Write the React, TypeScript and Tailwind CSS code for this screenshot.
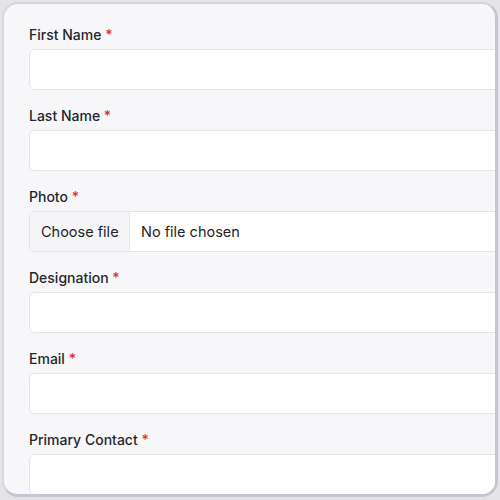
import React from "react";

function Label({ text }: { text: string }) {
  return (
    <div className="h-5 text-[14px] leading-5 font-medium text-[#24272c]">
      {text} <span className="text-[#e0303a]">*</span>
    </div>
  );
}

function TextField({ label }: { label: string }) {
  return (
    <div className="flex flex-col gap-1">
      <Label text={label} />
      <div className="h-[41px] w-[520px] rounded-[6px] border border-[#e3e3e8] bg-white" />
    </div>
  );
}

export default function App() {
  return (
    <div
      className="w-[500px] h-[500px] bg-[#e4e4e8] pt-[2px] pl-[2px] overflow-hidden"
      style={{ fontFamily: "Inter, 'Noto Sans', sans-serif" }}
    >
      <div className="w-[496px] h-[495px] rounded-[16px] border-t-2 border-l-2 border-r-[3px] border-b-[3px] border-t-[#d4d4da] border-l-[#d6d6db] border-r-[#c5c5d3] border-b-[#c5c5d3] bg-[#f7f7f9] overflow-hidden">
        <div className="pt-[21px] pl-[25px] flex flex-col gap-4">
          <TextField label="First Name" />
          <TextField label="Last Name" />
          <div className="flex flex-col gap-1">
            <Label text="Photo" />
            <div className="h-[41px] w-[520px] rounded-[6px] border border-[#e3e3e8] bg-white flex overflow-hidden text-[14.5px] text-[#1f2328]">
              <div className="w-[100px] bg-[#f5f5f7] border-r border-[#e3e3e8] flex items-center pl-[11px]">
                Choose file
              </div>
              <div className="flex items-center pl-[11px]">No file chosen</div>
            </div>
          </div>
          <TextField label="Designation" />
          <TextField label="Email" />
          <TextField label="Primary Contact" />
        </div>
      </div>
    </div>
  );
}
